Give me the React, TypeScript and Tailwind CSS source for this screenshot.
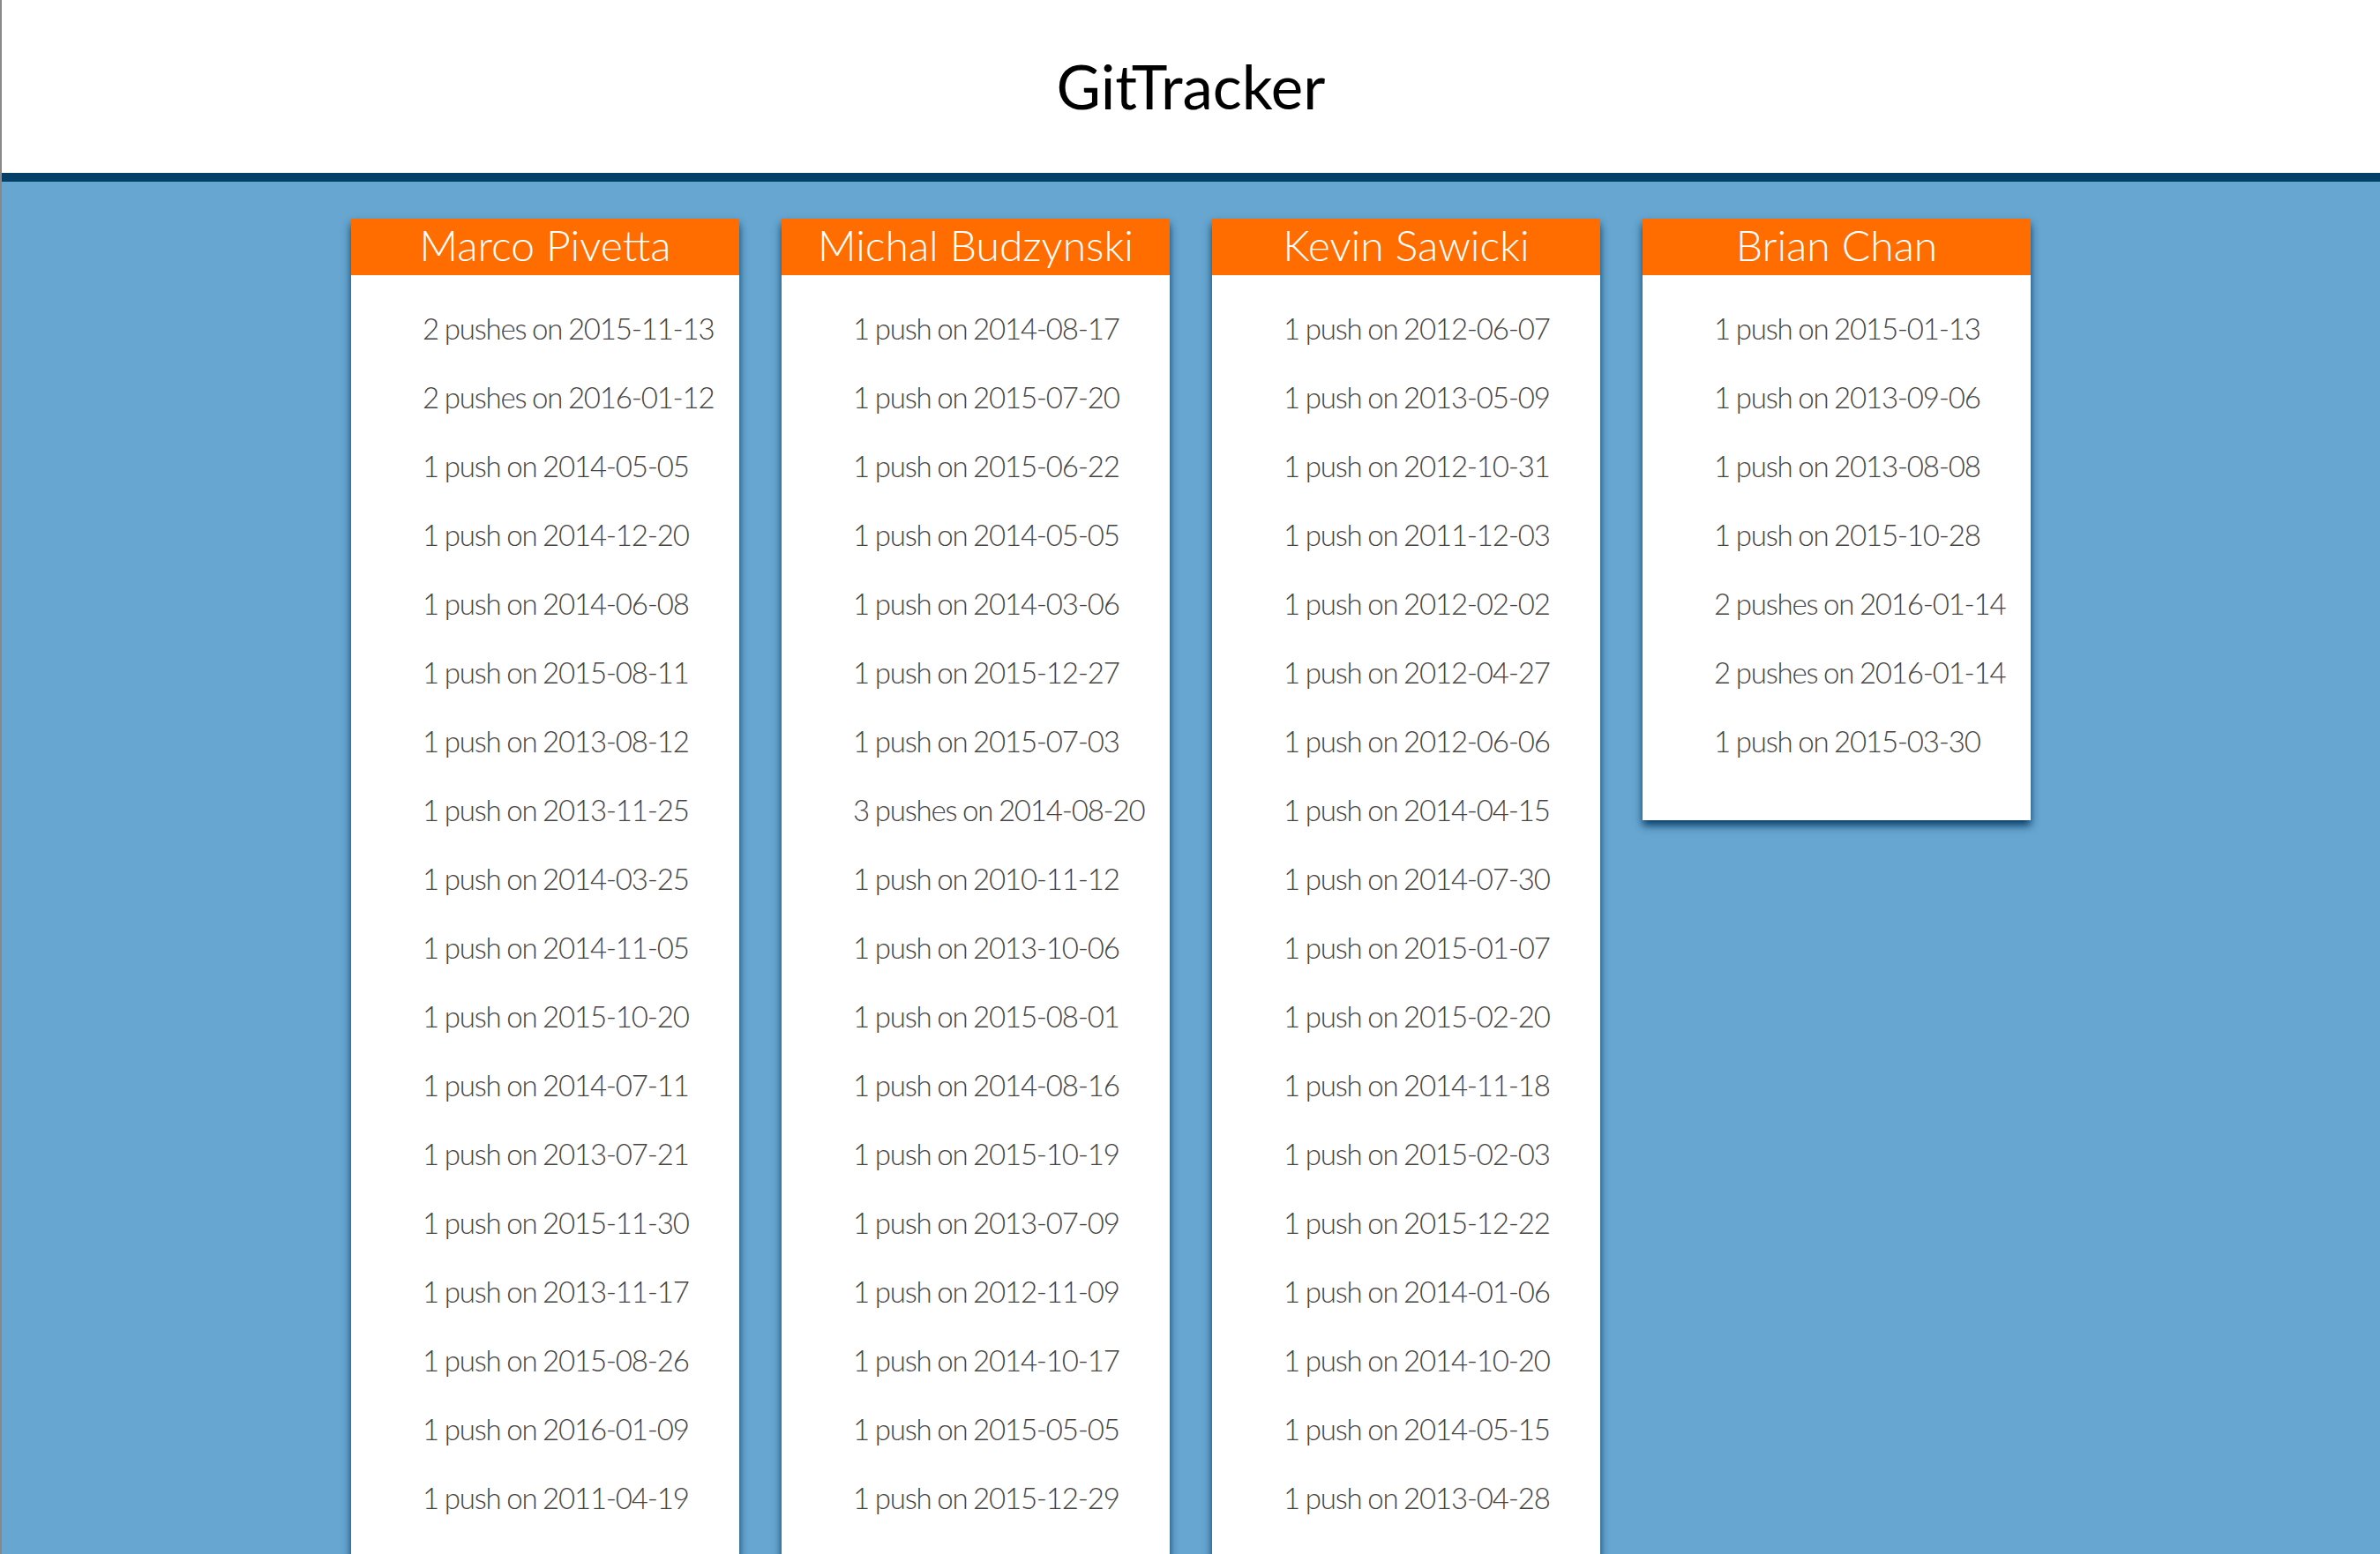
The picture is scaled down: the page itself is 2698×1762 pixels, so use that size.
const trackers = [
  {
    name: "Marco Pivetta",
    pushes: [
      "2 pushes on 2015-11-13",
      "2 pushes on 2016-01-12",
      "1 push on 2014-05-05",
      "1 push on 2014-12-20",
      "1 push on 2014-06-08",
      "1 push on 2015-08-11",
      "1 push on 2013-08-12",
      "1 push on 2013-11-25",
      "1 push on 2014-03-25",
      "1 push on 2014-11-05",
      "1 push on 2015-10-20",
      "1 push on 2014-07-11",
      "1 push on 2013-07-21",
      "1 push on 2015-11-30",
      "1 push on 2013-11-17",
      "1 push on 2015-08-26",
      "1 push on 2016-01-09",
      "1 push on 2011-04-19",
    ],
  },
  {
    name: "Michal Budzynski",
    pushes: [
      "1 push on 2014-08-17",
      "1 push on 2015-07-20",
      "1 push on 2015-06-22",
      "1 push on 2014-05-05",
      "1 push on 2014-03-06",
      "1 push on 2015-12-27",
      "1 push on 2015-07-03",
      "3 pushes on 2014-08-20",
      "1 push on 2010-11-12",
      "1 push on 2013-10-06",
      "1 push on 2015-08-01",
      "1 push on 2014-08-16",
      "1 push on 2015-10-19",
      "1 push on 2013-07-09",
      "1 push on 2012-11-09",
      "1 push on 2014-10-17",
      "1 push on 2015-05-05",
      "1 push on 2015-12-29",
    ],
  },
  {
    name: "Kevin Sawicki",
    pushes: [
      "1 push on 2012-06-07",
      "1 push on 2013-05-09",
      "1 push on 2012-10-31",
      "1 push on 2011-12-03",
      "1 push on 2012-02-02",
      "1 push on 2012-04-27",
      "1 push on 2012-06-06",
      "1 push on 2014-04-15",
      "1 push on 2014-07-30",
      "1 push on 2015-01-07",
      "1 push on 2015-02-20",
      "1 push on 2014-11-18",
      "1 push on 2015-02-03",
      "1 push on 2015-12-22",
      "1 push on 2014-01-06",
      "1 push on 2014-10-20",
      "1 push on 2014-05-15",
      "1 push on 2013-04-28",
    ],
  },
  {
    name: "Brian Chan",
    pushes: [
      "1 push on 2015-01-13",
      "1 push on 2013-09-06",
      "1 push on 2013-08-08",
      "1 push on 2015-10-28",
      "2 pushes on 2016-01-14",
      "2 pushes on 2016-01-14",
      "1 push on 2015-03-30",
    ],
  },
];

function TrackerCard({ name, pushes }: { name: string; pushes: string[] }) {
  return (
    <div className="w-[440px] shrink-0 bg-white shadow-[0_6px_9px_rgba(0,50,90,0.9)]">
      <div className="h-[64px] bg-[#ff6d00] flex items-center justify-center text-white text-[48px] font-light leading-none pb-[4px]">
        {name}
      </div>
      <ul className="pt-[21px] pb-[51px] pl-[81px]">
        {pushes.map((p, i) => (
          <li
            key={i}
            className="h-[78px] flex items-center whitespace-nowrap text-[33px] font-light text-[#444] leading-none tracking-[-1.2px] [word-spacing:-1px]"
          >
            {p}
          </li>
        ))}
      </ul>
    </div>
  );
}

export default function App() {
  return (
    <div className="min-h-screen bg-[#66a6d0] border-l-2 border-[#888]" style={{ fontFamily: "Lato, 'Open Sans', sans-serif" }}>
      <header className="h-[206px] bg-white border-b-[10px] border-[#033f67] flex items-center justify-center">
        <h1 className="text-[69px] font-normal text-black leading-none pb-[2px]">GitTracker</h1>
      </header>
      <main className="pt-[42px] flex justify-center items-start gap-[48px]">
        {trackers.map(t => (
          <TrackerCard key={t.name} name={t.name} pushes={t.pushes} />
        ))}
      </main>
    </div>
  );
}
